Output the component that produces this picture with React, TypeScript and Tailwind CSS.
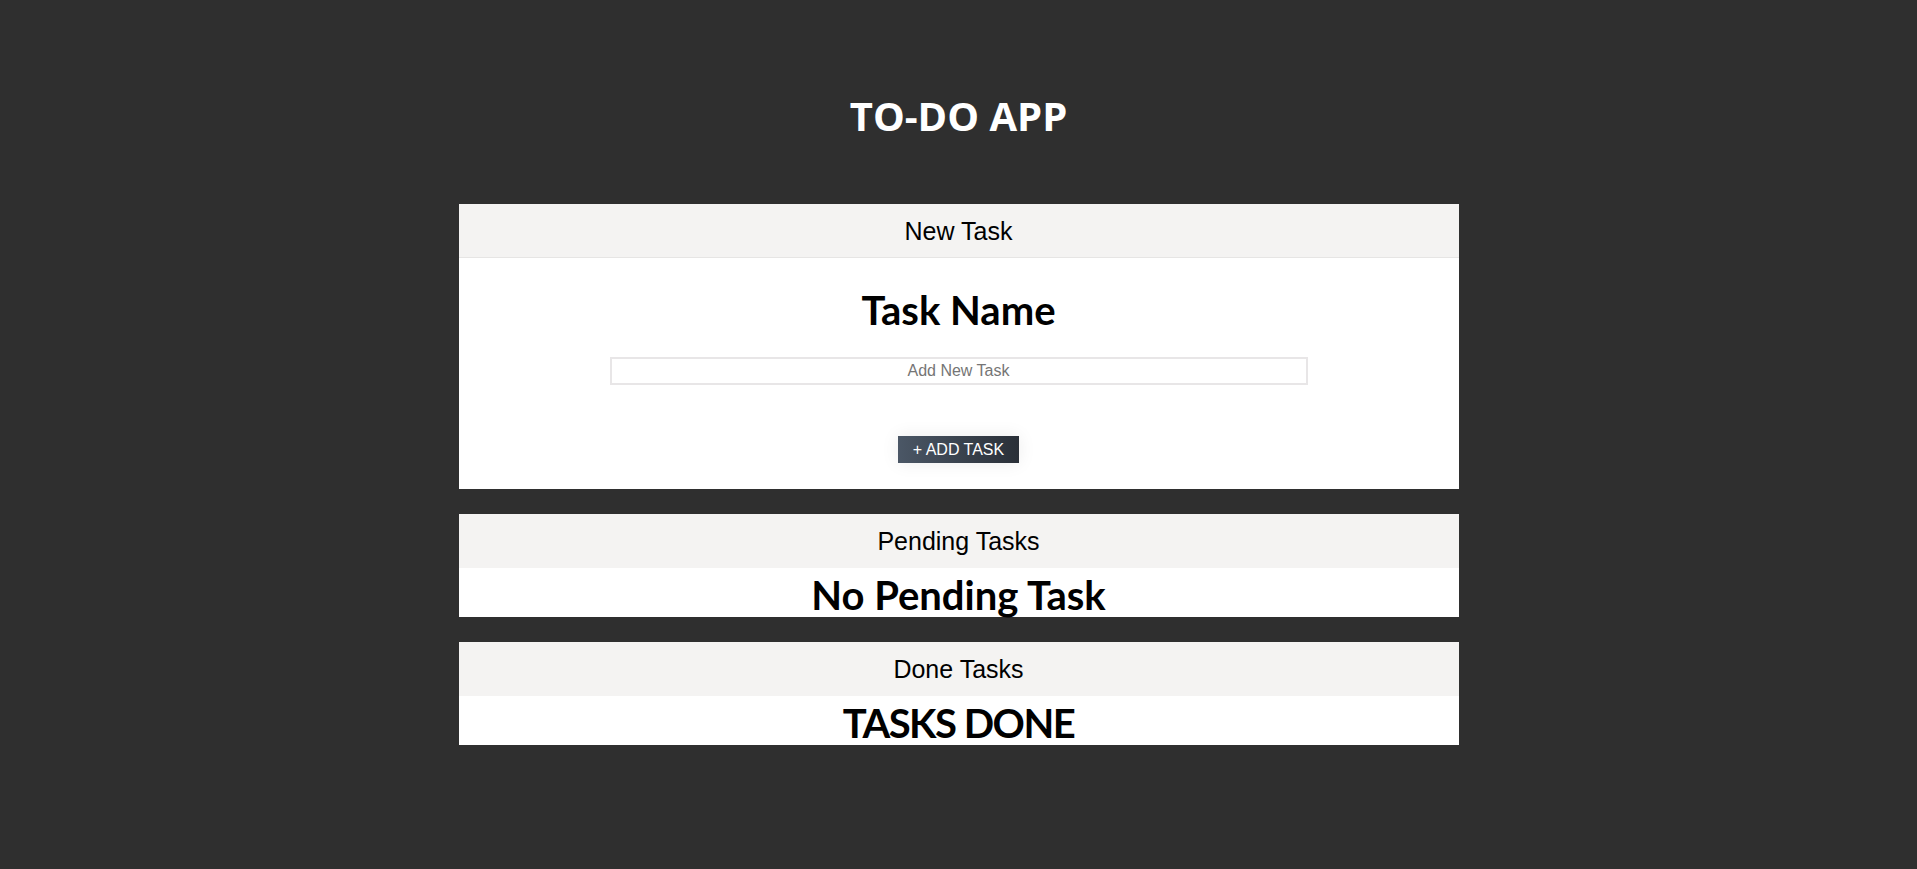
const heading = "font-['Lato',sans-serif] font-bold text-[40px] leading-[48px] text-black text-center"

function CardHeader({ title, border }: { title: string; border?: boolean }) {
  return (
    <div
      className={`h-[54px] flex items-center justify-center bg-[#f4f3f2] text-[25px] leading-[30px] text-black ${
        border ? 'border-b border-[#e6e5e4]' : ''
      }`}
    >
      {title}
    </div>
  )
}

export default function App() {
  return (
    <div className="min-h-screen bg-[#2f2f2f] font-['Liberation_Sans',Arial,sans-serif] pt-[92px]">
      <h1 className="font-['Open_Sans',sans-serif] font-bold text-[40px] leading-[48px] text-white text-center">
        TO-DO APP
      </h1>

      <div className="w-[1000px] mx-auto mt-[64px] flex flex-col gap-[25px]">
        <section className="bg-white">
          <CardHeader title="New Task" border />
          <div className="flex flex-col items-center pt-[28px] pb-[26px]">
            <h2 className={heading}>Task Name</h2>
            <input
              type="text"
              placeholder="Add New Task"
              className="mt-[23px] w-[698px] h-[28px] border-2 border-[#e8e6e7] text-center text-[16px] placeholder:text-[#757575] outline-none"
            />
            <button className="mt-[51px] h-[27px] px-[15px] flex items-center bg-gradient-to-r from-[#4b5766] to-[#2a3038] text-white text-[16px] leading-none shadow-[0_0_18px_rgba(0,0,0,0.08)]">
              + ADD TASK
            </button>
          </div>
        </section>

        <section className="bg-white">
          <CardHeader title="Pending Tasks" />
          <div className="h-[49px] pt-[3px]">
            <h2 className={heading}>No Pending Task</h2>
          </div>
        </section>

        <section className="bg-white">
          <CardHeader title="Done Tasks" />
          <div className="h-[49px] pt-[3px]">
            <h2 className={`${heading} tracking-[-1.5px]`}>TASKS DONE</h2>
          </div>
        </section>
      </div>
    </div>
  )
}
